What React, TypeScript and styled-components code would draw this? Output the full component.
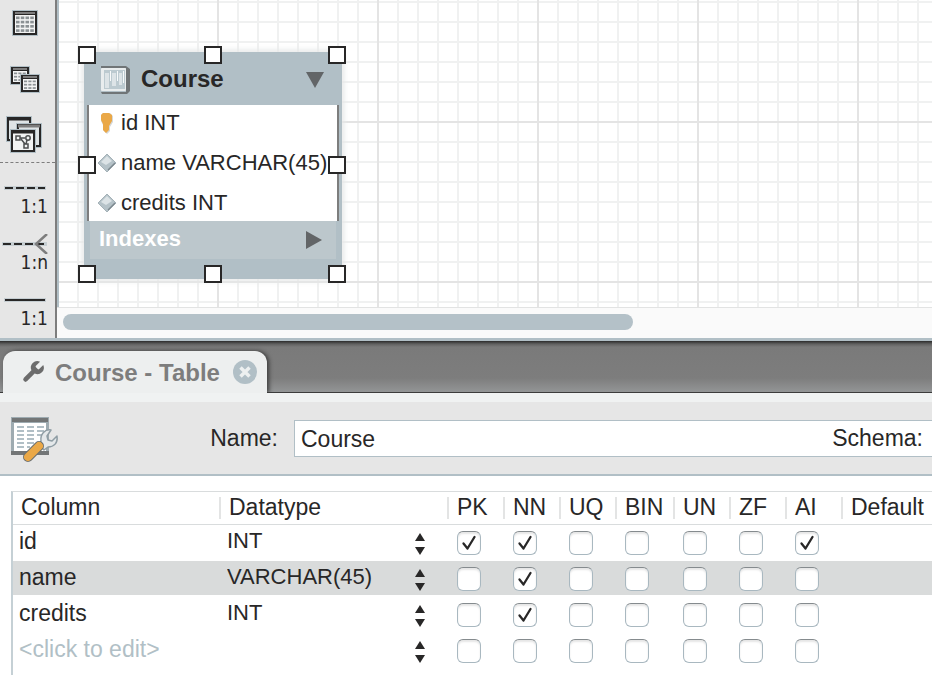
import React, { useState } from "react";
import styled, { createGlobalStyle, css } from "styled-components";

const color = {
  ink: "#282727",
  gray: "#7d7d7d",
  steel: "#b1bfc6",
  panel: "#e6e6e6",
  light: "#f0f2f2",
  minor: "#f0f1f1",
  major: "#e4e4e4",
  orange: "#eaa847",
};

const GlobalStyle = createGlobalStyle`
  *, *::before, *::after { box-sizing: border-box; }
  body { margin: 0; background: #fff; color: ${color.ink}; font-family: "Liberation Sans", Arial, sans-serif; }
  button, input { font: inherit; color: inherit; margin: 0; padding: 0; border: 0; background: none; }
  button { cursor: pointer; }
  svg { display: block; flex: none; }
`;

const Page = styled.div`
  display: flex;
  flex-direction: column;
  min-height: 100vh;
`;

/* ---------- Diagram workspace ---------- */

const Workspace = styled.section`
  display: flex;
  border-bottom: 3px solid ${color.steel};
`;

const Toolbar = styled.nav`
  flex: none;
  display: flex;
  flex-direction: column;
  width: 57px;
  background: ${color.panel};
  border-right: 2px solid ${color.gray};
`;

const TableTools = styled.div`
  display: flex;
  flex-direction: column;
  gap: 10px;
  padding-bottom: 4px;
`;

const ToolButton = styled.button`
  display: flex;
  align-items: center;
  padding-left: 5px;
  height: 46px;
`;

const RelationTools = styled.div`
  display: flex;
  flex-direction: column;
  padding-top: 7px;
  border-top: 1px dashed ${color.gray};
`;

const RelationButton = styled.button`
  display: flex;
  flex-direction: column;
  height: 56px;
  padding-top: 8px;
`;

const RelationLabel = styled.span`
  align-self: flex-end;
  padding-right: 7px;
  font: 19px/16px "DejaVu Sans Condensed", "DejaVu Sans", sans-serif;
`;

const CanvasColumn = styled.div`
  flex: 1;
  min-width: 0;
  display: flex;
  flex-direction: column;
`;

const gridLines = (size: number, tone: string) =>
  `linear-gradient(to right, transparent ${size - 2}px, ${tone} ${size - 2}px), linear-gradient(transparent ${size - 2}px, ${tone} ${size - 2}px)`;

const Canvas = styled.div`
  position: relative;
  flex: 1;
  border-left: 2px solid ${color.steel};
  background-image: ${gridLines(160, color.major)}, ${gridLines(20, color.minor)};
  background-size: 160px 160px, 160px 160px, 20px 20px, 20px 20px;
  background-position: 0 -37px, 0 -37px, 0 3px, 0 3px;
`;

const ScrollTrack = styled.div`
  height: 31px;
  padding: 6px;
  border-top: 1px solid #e2e3e3;
  background: #fafafa;
`;

const ScrollThumb = styled.div`
  width: 66%;
  height: 16px;
  border-radius: 8px;
  background: #b4c1c8;
`;

const Entity = styled.article`
  position: absolute;
  left: 25px;
  top: 52px;
  width: 258px;
  padding: 0 3px 20px;
  border-radius: 8px;
  background: ${color.steel};
  box-shadow: 0 0 4px 3px rgba(230, 232, 233, 0.8);
`;

const EntityHeader = styled.header`
  display: flex;
  align-items: center;
  height: 53px;
  padding: 2px 15px 0 13px;
`;

const EntityTitle = styled.h2`
  flex: 1;
  margin: 0 0 2px 10px;
  font-size: 24px;
  line-height: 28px;
`;

const FieldList = styled.ul`
  display: flex;
  flex-direction: column;
  gap: 4px;
  margin: 0;
  padding: 0;
  list-style: none;
  background: #fff;
  border: solid ${color.gray};
  border-width: 0 2px;
`;

const Field = styled.li`
  display: flex;
  align-items: center;
  gap: 4px;
  height: 36px;
  padding-left: 8px;
  font-size: 22px;
  white-space: nowrap;
`;

const IndexesBar = styled.div`
  display: flex;
  align-items: center;
  justify-content: space-between;
  height: 38px;
  margin: 0 3px;
  padding: 0 13px 0 9px;
  background: #bcc7cc;
  color: #fff;
  font-size: 22px;
  font-weight: bold;
`;

const IndexesLabel = styled.span`
  padding-bottom: 2px;
`;

type Place = { $x: "start" | "middle" | "end"; $y: "start" | "middle" | "end" };

const Handle = styled.span<Place>`
  position: absolute;
  width: 18px;
  height: 18px;
  border: 2px solid ${color.ink};
  background: #fff;
  ${(p) =>
    p.$x === "start"
      ? css`left: -6px;`
      : p.$x === "end"
        ? css`right: -4px;`
        : css`left: calc(50% - 9px);`}
  ${(p) =>
    p.$y === "start"
      ? css`top: -6px;`
      : p.$y === "end"
        ? css`bottom: -4px;`
        : css`top: calc(50% - 10px);`}
`;

/* ---------- Table editor ---------- */

const TabBar = styled.div`
  display: flex;
  align-items: flex-end;
  height: 52px;
  padding-left: 3px;
  background: linear-gradient(#2b2b2b, #606060 3px, #7a7a7a 6px, #7d7d7d 37px, #939596 51px, #3c3c3c 51px);
`;

const Tab = styled.div`
  display: flex;
  align-items: center;
  height: 42px;
  padding: 0 10px 0 17px;
  border-radius: 12px 12px 0 0;
  background: #edefef;
  box-shadow: 2px 0 4px #3c3c3c;
  clip-path: inset(-10px -10px 0 -3px);
`;

const TabTitle = styled.span`
  margin: 2px 13px 0 9px;
  color: ${color.gray};
  font-size: 24px;
  line-height: 28px;
  font-weight: bold;
`;

const EditorHeader = styled.div`
  display: flex;
  align-items: center;
  height: 83px;
  padding-left: 9px;
  border-top: 9px solid ${color.light};
  border-bottom: 2px solid ${color.steel};
  background: ${color.panel};
  font-size: 23px;
`;

const NameLabel = styled.label`
  margin: 0 16px 0 auto;
`;

const NameBox = styled.div`
  display: flex;
  align-items: center;
  width: calc(100% - 285px);
  height: 37px;
  margin-top: 1px;
  padding: 2px 9px 0 6px;
  border: 1px solid ${color.steel};
  border-right: 0;
  background: #fff;
`;

const TextInput = styled.input`
  flex: 1;
  min-width: 0;
  width: 100%;
  height: 32px;
  outline: 0;
  &::placeholder { color: ${color.steel}; opacity: 1; }
`;

const SchemaLabel = styled.span`
  padding-bottom: 3px;
`;

const GridArea = styled.div`
  flex: 1;
  padding: 15px 0 0 11px;
  display: flex;
`;

const GridFrame = styled.div`
  flex: 1;
  min-width: 0;
  overflow: hidden;
  border-top: 1px solid #d9dcdd;
  border-left: 2px solid #c5d0d5;
`;

const Grid = styled.table`
  width: 100%;
  table-layout: fixed;
  border-collapse: separate;
  border-spacing: 0;
  font-size: 23px;
`;

const Col = styled.col<{ $w?: number }>`
  width: ${(p) => (p.$w ? `${p.$w}px` : "auto")};
`;

const HeadCell = styled.th`
  height: 33px;
  padding: 0 0 1px 8px;
  border-bottom: 1px solid #d9dcdd;
  background: linear-gradient(#e3e4e4, #e3e4e4) right center / 2px 22px no-repeat;
  font-weight: normal;
  line-height: 31px;
  text-align: left;
  white-space: nowrap;
  &:last-child { background: none; }
`;

const BodyRow = styled.tr<{ $selected: boolean }>`
  background: ${(p) => (p.$selected ? "#d9dbdb" : "#fff")};
`;

const Cell = styled.td`
  height: 36px;
  padding: 0 0 2px 6px;
  border-bottom: 2px solid #fff;
`;

const CheckCell = styled(Cell)`
  padding: 2px 0 0 8px;
`;

const DatatypeEditor = styled.div`
  display: flex;
  align-items: center;
  padding-right: 24px;
  font-size: 22px;
`;

const StepButton = styled.button`
  padding-top: 6px;
`;

const checkMark = `url("data:image/svg+xml,%3Csvg xmlns='http://www.w3.org/2000/svg' viewBox='0 0 22 22'%3E%3Cpath d='M5.5 11.5l4 5 7-11.500' fill='none' stroke='%23282727' stroke-width='2.300' stroke-linecap='round' stroke-linejoin='round'/%3E%3C/svg%3E")`;

const CheckBox = styled.input`
  appearance: none;
  display: block;
  width: 24px;
  height: 24px;
  border: 1px solid #a9b8c0;
  border-top-color: #858b8e;
  border-radius: 6px;
  background: #fff;
  box-shadow: inset 0 2px 2px #e6e6e6;
  &:checked { background: #fff ${checkMark} center / 22px no-repeat; }
`;

/* ---------- Icons ---------- */

const MiniTable = ({ x, y, w, h, cols, rows }: { x: number; y: number; w: number; h: number; cols: number; rows: number }) => {
  const cw = (w - 5) / cols;
  const ch = (h - 7) / rows;
  return (
    <g transform={`translate(${x} ${y})`}>
      <rect x="-1" y="-1" width={w + 2} height={h + 2} fill={color.steel} />
      <rect width={w} height={h} fill={color.ink} />
      <rect x="2" y="1" width={w - 4} height="2" fill={color.gray} />
      <rect x="2" y="4" width={w - 4} height={h - 6} fill="#f3f4f4" />
      {Array.from({ length: cols * rows }, (_, i) => (
        <rect
          key={i}
          x={3 + (i % cols) * cw}
          y={5.5 + Math.floor(i / cols) * ch}
          width={cw - 1.2}
          height={ch - 1.6}
          fill="#8b9194"
        />
      ))}
    </g>
  );
};

const TableIcon = () => (
  <svg width="40" height="40" viewBox="0 0 40 40">
    <MiniTable x={8} y={8} w={24} h={24} cols={4} rows={4} />
  </svg>
);

const ViewIcon = () => (
  <svg width="40" height="40" viewBox="0 0 40 40">
    <MiniTable x={6} y={8} w={18} h={17} cols={3} rows={3} />
    <MiniTable x={16} y={16} w={18} h={17} cols={3} rows={3} />
  </svg>
);

const RoutineIcon = () => (
  <svg width="40" height="40" viewBox="0 0 40 40">
    <g stroke={color.ink} strokeWidth="2">
      <rect x="3" y="3" width="22" height="22" fill="#dfe4e6" stroke={color.steel} strokeWidth="4" />
      <rect x="3" y="3" width="22" height="22" fill="#dfe4e6" />
      <path d="M3 4h22" strokeWidth="3" />
      <rect x="13" y="10" width="22" height="21" fill="#dfe4e6" stroke={color.steel} strokeWidth="4" />
      <rect x="13" y="10" width="22" height="21" fill="#dfe4e6" />
      <path d="M13 11h22" strokeWidth="3" stroke={color.gray} />
      <rect x="7" y="16" width="22" height="20" fill="#f3f4f4" stroke={color.steel} strokeWidth="4" />
      <rect x="7" y="16" width="22" height="20" fill="#f3f4f4" />
      <path d="M7 17h22" strokeWidth="3" />
    </g>
    <g fill="none" stroke="#4c4e4f" strokeWidth="1.500">
      <rect x="11" y="21" width="4" height="4" />
      <circle cx="23" cy="23" r="2.200" />
      <rect x="19" y="29" width="4" height="4" />
      <path d="M15 23h5M16 24l4 5M22 25l-1 4" />
    </g>
  </svg>
);

const RelationLine = ({ kind }: { kind: "dashed" | "crow" | "solid" }) => (
  <svg width="55" height="20" viewBox="0 0 55 20">
    <path d={kind === "crow" ? "M2 10h45" : "M4 10h42"} stroke={color.steel} strokeWidth="4" opacity=".6" />
    <path
      d={kind === "crow" ? "M3 10h43" : "M5 10h40"}
      stroke={color.ink}
      strokeWidth="2"
      strokeDasharray={kind === "solid" ? undefined : "8 3"}
    />
    {kind === "crow" && <path d="M47 0L36 10l11 10" fill="none" stroke={color.gray} strokeWidth="2.500" />}
  </svg>
);

const EntityIcon = () => (
  <svg width="31" height="30" viewBox="0 0 31 30">
    <path d="M1 1h25l4 3v22l-3 3H2l-1-2h25V3H1z" fill="#707577" />
    <rect x="1" y="3" width="25" height="23" rx="1" fill="#e9edee" />
    <path d="M4 5h21v19H4z" fill="#bccad0" />
    <path d="M5 8h4v15H5zM12 8h4v13h-4zM19 8h3v12h-3z" fill="#dde4e7" />
    <path d="M10.500 6v10M17.500 6v10M23.500 6v12" stroke="#f8fafa" strokeWidth="1" />
  </svg>
);

const KeyIcon = () => (
  <svg width="20" height="24" viewBox="0 0 20 24">
    <path d="M6 2h7l3 3v6l-3 5v4l-3 3-4-4v-5L4 10V4z" fill="#d5d8d9" />
    <path d="M6 2h6l3 2v6l-3 5v4l-3 3-3-3v-6L4 9V4z" fill={color.orange} />
  </svg>
);

const DiamondIcon = () => (
  <svg width="20" height="20" viewBox="0 0 20 20">
    <path d="M10 1l9 9-9 9-9-9z" fill="#b5c2c8" stroke="#a5b2b8" />
    <path d="M10 3l-6 6 5 3 6-4z" fill="#dce3e6" />
    <path d="M11 17l7-7" stroke="#7d898f" strokeWidth="1.200" />
  </svg>
);

const Triangle = ({ dir }: { dir: "down" | "right" }) => (
  <svg width="18" height="18" viewBox="0 0 18 18">
    <path d={dir === "down" ? "M0 1h18L9 17z" : "M1 0l16 9-16 9z"} fill="#626567" />
  </svg>
);

const WrenchIcon = () => (
  <svg width="26" height="26" viewBox="0 0 24 24" fill="#6c6c6c">
    <path d="M14.700 6.300a1 1 0 0 0 0 1.400l1.600 1.600a1 1 0 0 0 1.400 0l3.770-3.770a6 6 0 0 1-7.940 7.940l-6.910 6.910a2.120 2.120 0 0 1-3-3l6.910-6.910a6 6 0 0 1 7.940-7.940l-3.760 3.760z" />
  </svg>
);

const CloseIcon = () => (
  <svg width="24" height="24" viewBox="0 0 24 24">
    <circle cx="12" cy="12" r="12" fill={color.steel} />
    <path d="M7.500 7.500l9 9M16.500 7.500l-9 9" stroke="#edf0f0" strokeWidth="3.500" />
  </svg>
);

const EditTableIcon = () => (
  <svg width="50" height="50" viewBox="0 0 50 50">
    <rect x="2" y="4" width="38" height="38" fill="#9eabb1" />
    <rect x="3" y="5" width="36" height="4" fill="#737677" />
    <path d="M2 38h38v4H2z" fill="#737677" />
    <rect x="5" y="10" width="32" height="28" fill="#fff" />
    <path
      d="M8 14h7M18 14h7M28 14h7M8 18h7M18 18h7M28 18h7M8 22h7M18 22h7M28 22h5M8 26h7M18 26h7M8 30h7M18 30h7M8 34h7M18 34h3"
      stroke="#b1bfc6"
      strokeWidth="2"
    />
    <path
      d="M42 17l-4 6 1 4 4 1 5-5c1 7-3 11-9 11l-4 3-5-5 2-4c-1-7 4-12 10-11z"
      fill="#e4e8ea"
      stroke="#8f9da4"
      strokeWidth="1.500"
      strokeLinejoin="round"
    />
    <path d="M30 33L19 44" stroke="#6b6f70" strokeWidth="10" strokeLinecap="round" />
    <path d="M30 33L19 44" stroke={color.orange} strokeWidth="8" strokeLinecap="round" />
  </svg>
);

const StepperIcon = () => (
  <svg width="10" height="22" viewBox="0 0 10 22">
    <path d="M5 0l5 8H0zM5 22l5-8H0z" fill={color.ink} />
  </svg>
);

/* ---------- Data ---------- */

const flags = ["PK", "NN", "UQ", "BIN", "UN", "ZF", "AI"];

const initialColumns = [
  { name: "id", type: "INT", set: ["PK", "NN", "AI"] },
  { name: "name", type: "VARCHAR(45)", set: ["NN"] },
  { name: "credits", type: "INT", set: ["NN"] },
  { name: "", type: "", set: [] as string[] },
];

const handles: [Place["$x"], Place["$y"]][] = [
  ["start", "start"],
  ["middle", "start"],
  ["end", "start"],
  ["start", "middle"],
  ["end", "middle"],
  ["start", "end"],
  ["middle", "end"],
  ["end", "end"],
];

export default function App() {
  const [selected, setSelected] = useState(1);

  return (
    <Page>
      <GlobalStyle />
      <Workspace>
        <Toolbar>
          <TableTools>
            <ToolButton aria-label="Place table"><TableIcon /></ToolButton>
            <ToolButton aria-label="Place view"><ViewIcon /></ToolButton>
            <ToolButton aria-label="Place routine group"><RoutineIcon /></ToolButton>
          </TableTools>
          <RelationTools>
            <RelationButton>
              <RelationLine kind="dashed" />
              <RelationLabel>1:1</RelationLabel>
            </RelationButton>
            <RelationButton>
              <RelationLine kind="crow" />
              <RelationLabel>1:n</RelationLabel>
            </RelationButton>
            <RelationButton>
              <RelationLine kind="solid" />
              <RelationLabel>1:1</RelationLabel>
            </RelationButton>
          </RelationTools>
        </Toolbar>
        <CanvasColumn>
          <Canvas>
            <Entity>
              <EntityHeader>
                <EntityIcon />
                <EntityTitle>Course</EntityTitle>
                <Triangle dir="down" />
              </EntityHeader>
              <FieldList>
                <Field><KeyIcon />id INT</Field>
                <Field><DiamondIcon />name VARCHAR(45)</Field>
                <Field><DiamondIcon />credits INT</Field>
              </FieldList>
              <IndexesBar>
                <IndexesLabel>Indexes</IndexesLabel>
                <Triangle dir="right" />
              </IndexesBar>
              {handles.map(([x, y]) => (
                <Handle key={x + y} $x={x} $y={y} />
              ))}
            </Entity>
          </Canvas>
          <ScrollTrack>
            <ScrollThumb />
          </ScrollTrack>
        </CanvasColumn>
      </Workspace>

      <TabBar>
        <Tab>
          <WrenchIcon />
          <TabTitle>Course - Table</TabTitle>
          <button aria-label="Close tab"><CloseIcon /></button>
        </Tab>
      </TabBar>

      <EditorHeader>
        <EditTableIcon />
        <NameLabel htmlFor="table-name">Name:</NameLabel>
        <NameBox>
          <TextInput id="table-name" defaultValue="Course" />
          <SchemaLabel>Schema:</SchemaLabel>
        </NameBox>
      </EditorHeader>

      <GridArea>
        <GridFrame>
          <Grid>
            <colgroup>
              <Col $w={208} />
              <Col $w={228} />
              {flags.map((flag) => (
                <Col key={flag} $w={flag === "BIN" ? 58 : 56} />
              ))}
              <Col />
            </colgroup>
            <thead>
              <tr>
                <HeadCell>Column</HeadCell>
                <HeadCell>Datatype</HeadCell>
                {flags.map((flag) => (
                  <HeadCell key={flag}>{flag}</HeadCell>
                ))}
                <HeadCell>Default</HeadCell>
              </tr>
            </thead>
            <tbody>
              {initialColumns.map((column, i) => (
                <BodyRow key={i} $selected={i === selected} onClick={() => setSelected(i)}>
                  <Cell>
                    <TextInput aria-label="Column name" defaultValue={column.name} placeholder="<click to edit>" />
                  </Cell>
                  <Cell>
                    <DatatypeEditor>
                      <TextInput aria-label="Datatype" defaultValue={column.type} />
                      <StepButton aria-label="Choose datatype"><StepperIcon /></StepButton>
                    </DatatypeEditor>
                  </Cell>
                  {flags.map((flag) => (
                    <CheckCell key={flag}>
                      <CheckBox type="checkbox" aria-label={flag} defaultChecked={column.set.includes(flag)} />
                    </CheckCell>
                  ))}
                  <Cell />
                </BodyRow>
              ))}
            </tbody>
          </Grid>
        </GridFrame>
      </GridArea>
    </Page>
  );
}
